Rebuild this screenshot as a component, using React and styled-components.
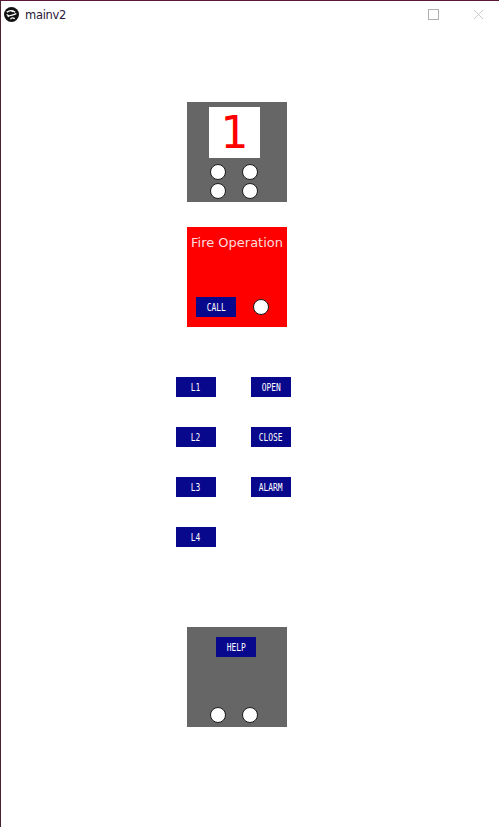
import React from 'react';
import styled, { createGlobalStyle } from 'styled-components';

const GlobalStyle = createGlobalStyle`
  html, body {
    margin: 0;
    padding: 0;
    background: #ffffff;
  }
  #root {
    min-height: 827px;
  }
`;

const Window = styled.div`
  width: 499px;
  height: 827px;
  box-sizing: border-box;
  border-top: 1px solid #5a1838;
  border-left: 1px solid #4a2232;
  background: #ffffff;
  overflow: hidden;
`;

const TitleBar = styled.div`
  height: 27px;
  display: flex;
  align-items: center;
  padding: 0 0 0 3px;
`;

const AppIcon = styled.svg`
  width: 15px;
  height: 15px;
  flex: none;
`;

const Caption = styled.span`
  margin-left: 6px;
  font-family: 'DejaVu Sans', sans-serif;
  font-size: 11.5px;
  color: #2a1838;
  flex: 1;
  letter-spacing: -0.3px;
`;

const Control = styled.div`
  width: 20px;
  height: 12px;
  display: flex;
  align-items: center;
  justify-content: center;
  margin-right: ${p => p.gap}px;
`;

const MaxBox = styled.div`
  width: 9px;
  height: 9px;
  border: 1px solid #b0b0b0;
`;

const Stage = styled.div`
  display: flex;
  flex-direction: column;
  width: 116px;
  margin-left: 175px;
  padding-top: 74px;
`;

const Panel = styled.div`
  box-sizing: border-box;
  width: 100px;
  height: 100px;
  margin-left: 11px;
  margin-top: ${p => p.top || 0}px;
  background: ${p => p.fire ? '#ff0000' : '#666666'};
  display: flex;
  flex-direction: column;
`;

const Display = styled.div`
  width: 51px;
  height: 51px;
  margin: 5px 0 0 22px;
  background: #ffffff;
  color: #ff0000;
  font-family: 'DejaVu Sans', sans-serif;
  font-size: 44px;
  line-height: 51px;
  text-align: center;
`;

const Lamps = styled.div`
  display: grid;
  grid-template-columns: repeat(2, 16px);
  column-gap: 16px;
  row-gap: ${p => p.rowGap || 0}px;
  margin: ${p => p.m};
`;

const Lamp = styled.div`
  width: 16px;
  height: 16px;
  box-sizing: border-box;
  border-radius: 50%;
  background: #ffffff;
  border: 1px solid #1a1a1a;
`;

const FireTitle = styled.div`
  margin-top: 8px;
  text-align: center;
  font-family: 'DejaVu Sans', sans-serif;
  font-size: 13px;
  color: #fbdcdc;
`;

const FireRow = styled.div`
  display: flex;
  align-items: center;
  margin: auto 0 10px 9px;
  gap: 17px;
`;

const Key = styled.div`
  width: 40px;
  height: 20px;
  background: #08088c;
  display: flex;
  align-items: center;
  justify-content: center;
  margin: ${p => p.m || 0};
`;

const KeyLabel = styled.span`
  font-family: 'DejaVu Sans Mono', monospace;
  font-size: 11px;
  color: #ffffff;
  transform: scaleX(0.72);
  white-space: nowrap;
`;

const KeyGrid = styled.div`
  display: grid;
  grid-template-columns: 40px 40px;
  column-gap: 35px;
  row-gap: 30px;
  margin-top: 50px;
`;

const Button = ({ label, m }) => (
  <Key m={m}>
    <KeyLabel>{label}</KeyLabel>
  </Key>
);

export default function App() {
  return (
    <Window>
      <GlobalStyle />
      <TitleBar>
        <AppIcon viewBox="0 0 14 14">
          <circle cx="7" cy="7" r="7" fill="#111" />
          <path d="M2.5 5 C5 3 8 3 10.5 5 M3.5 9 C6 7 9 8 11.5 6 M6 11.5 C7 9.5 9 10 10 11 M2.5 7 L5 8.5" stroke="#fff" strokeWidth="1.2" fill="none" />
          <circle cx="8" cy="4" r="1" fill="#fff" />
        </AppIcon>
        <Caption>mainv2</Caption>
        <Control gap={25}>
          <MaxBox />
        </Control>
        <Control gap={11}>
          <svg width="11" height="11" viewBox="0 0 11 11">
            <path d="M1 1 L10 10 M10 1 L1 10" stroke="#c8c8c8" strokeWidth="1" />
          </svg>
        </Control>
      </TitleBar>
      <Stage>
        <Panel>
          <Display>1</Display>
          <Lamps m="6px 0 0 23px" rowGap={3}>
            <Lamp /><Lamp /><Lamp /><Lamp />
          </Lamps>
        </Panel>
        <Panel fire top={25}>
          <FireTitle>Fire Operation</FireTitle>
          <FireRow>
            <Button label="CALL" />
            <Lamp />
          </FireRow>
        </Panel>
        <KeyGrid>
          <Button label="L1" />
          <Button label="OPEN" />
          <Button label="L2" />
          <Button label="CLOSE" />
          <Button label="L3" />
          <Button label="ALARM" />
          <Button label="L4" />
        </KeyGrid>
        <Panel top={80}>
          <Button label="HELP" m="10px 0 0 29px" />
          <Lamps m="auto 0 4px 23px">
            <Lamp /><Lamp />
          </Lamps>
        </Panel>
      </Stage>
    </Window>
  );
}
